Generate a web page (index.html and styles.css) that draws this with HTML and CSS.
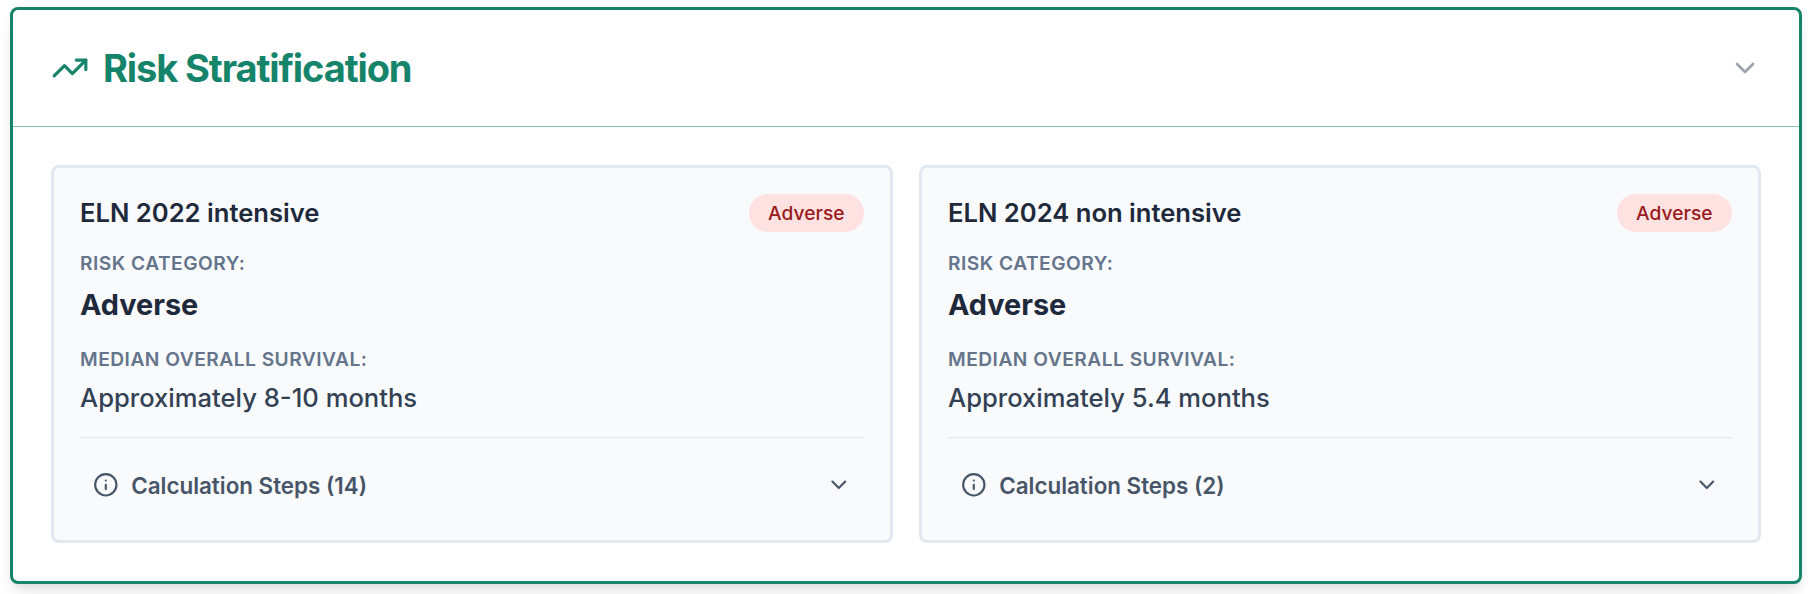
FILE: index.html
```html
<!DOCTYPE html>
<html>

<head>
    <title>Risk Stratification</title>
    <link rel="stylesheet" href="styles.css">
</head>

<body>
    <section class="panel">
        <header class="panel-header">
            <div class="panel-title">
                <svg class="trend-icon" viewBox="0 0 24 24" fill="none" stroke="currentColor" stroke-width="2" stroke-linecap="round" stroke-linejoin="round">
                    <polyline points="22 7 13.5 15.5 8.5 10.5 2 17"/>
                    <polyline points="16 7 22 7 22 13"/>
                </svg>
                <h2>Risk Stratification</h2>
            </div>
            <svg class="panel-chevron" viewBox="0 0 24 24" fill="none" stroke="currentColor" stroke-width="2" stroke-linecap="round" stroke-linejoin="round">
                <path d="m6 9 6 6 6-6"/>
            </svg>
        </header>
        <div class="panel-body">
            <article class="card">
                <div class="card-top">
                    <h3>ELN 2022 intensive</h3>
                    <span class="badge">Adverse</span>
                </div>
                <div class="label">RISK CATEGORY:</div>
                <div class="category">Adverse</div>
                <div class="label">MEDIAN OVERALL SURVIVAL:</div>
                <div class="survival">Approximately 8-10 months</div>
                <div class="steps">
                    <div class="steps-name">
                        <svg class="info-icon" viewBox="0 0 24 24" fill="none" stroke="currentColor" stroke-width="2" stroke-linecap="round" stroke-linejoin="round">
                            <circle cx="12" cy="12" r="10"/>
                            <path d="M12 16v-4"/>
                            <path d="M12 8h.01"/>
                        </svg>
                        <span>Calculation Steps (14)</span>
                    </div>
                    <svg class="steps-chevron" viewBox="0 0 24 24" fill="none" stroke="currentColor" stroke-width="2" stroke-linecap="round" stroke-linejoin="round">
                        <path d="m6 9 6 6 6-6"/>
                    </svg>
                </div>
            </article>
            <article class="card">
                <div class="card-top">
                    <h3>ELN 2024 non intensive</h3>
                    <span class="badge">Adverse</span>
                </div>
                <div class="label">RISK CATEGORY:</div>
                <div class="category">Adverse</div>
                <div class="label">MEDIAN OVERALL SURVIVAL:</div>
                <div class="survival">Approximately 5.4 months</div>
                <div class="steps">
                    <div class="steps-name">
                        <svg class="info-icon" viewBox="0 0 24 24" fill="none" stroke="currentColor" stroke-width="2" stroke-linecap="round" stroke-linejoin="round">
                            <circle cx="12" cy="12" r="10"/>
                            <path d="M12 16v-4"/>
                            <path d="M12 8h.01"/>
                        </svg>
                        <span>Calculation Steps (2)</span>
                    </div>
                    <svg class="steps-chevron" viewBox="0 0 24 24" fill="none" stroke="currentColor" stroke-width="2" stroke-linecap="round" stroke-linejoin="round">
                        <path d="m6 9 6 6 6-6"/>
                    </svg>
                </div>
            </article>
        </div>
    </section>
</body>

</html>
```

FILE: styles.css
```css
html,
body {
    height: 100%;
}

body {
    margin: 0;
    padding: 7px 6px 0 10px;
    box-sizing: border-box;
    background-color: #fff;
    font-family: Inter, "Liberation Sans", sans-serif;
    overflow: hidden;
}

.panel {
    height: 577px;
    box-sizing: border-box;
    border: 3px solid #15846a;
    border-radius: 8px;
    background-color: #fff;
    box-shadow: 0 10px 15px -3px rgba(0, 0, 0, 0.1), 0 4px 6px -2px rgba(0, 0, 0, 0.05);
}

.panel-header {
    height: 117px;
    box-sizing: border-box;
    padding: 0 38px;
    border-bottom: 1px solid #82c6b0;
    display: flex;
    align-items: center;
    justify-content: space-between;
}

.panel-title {
    display: flex;
    align-items: center;
    gap: 14px;
    color: #15846a;
}

.panel-title h2 {
    margin: 0;
    font-size: 38px;
    line-height: 44px;
    font-weight: 700;
    letter-spacing: -1.1px;
}

.trend-icon {
    width: 38px;
    height: 38px;
}

.panel-chevron {
    width: 32px;
    height: 32px;
    color: #9ca3af;
}

.panel-body {
    display: grid;
    grid-template-columns: 1fr 1fr;
    gap: 26px;
    padding: 38px;
}

.card {
    height: 378px;
    box-sizing: border-box;
    padding: 25px 26px 0;
    border: 3px solid #e2e8f0;
    border-radius: 8px;
    background-color: #f8fafc;
}

.card-top {
    display: flex;
    align-items: center;
    justify-content: space-between;
    height: 38px;
    margin-bottom: 19px;
}

.card-top h3 {
    margin: 0;
    font-size: 25.6px;
    font-weight: 600;
    color: #1e293b;
}

.badge {
    margin-top: 2px;
    padding: 0 19.5px;
    line-height: 38px;
    border-radius: 19px;
    background-color: #fee2e2;
    color: #991b1b;
    font-size: 19.2px;
    font-weight: 500;
}

.label {
    font-size: 19.2px;
    line-height: 26px;
    font-weight: 600;
    letter-spacing: 0.48px;
    color: #64748b;
}

.category {
    margin: 9px 0 21px;
    font-size: 28.8px;
    line-height: 40px;
    font-weight: 700;
    color: #1e293b;
}

.survival {
    margin-top: 7px;
    font-size: 25.6px;
    line-height: 38px;
    font-weight: 500;
    color: #334155;
}

.steps {
    margin-top: 20px;
    height: 94px;
    padding: 0 12px 0 12.8px;
    border-top: 1px solid #e2e8f0;
    display: flex;
    align-items: center;
    justify-content: space-between;
}

.steps-name {
    display: flex;
    align-items: center;
    gap: 12.8px;
    font-size: 22.4px;
    font-weight: 600;
    color: #475569;
}

.info-icon {
    width: 25.6px;
    height: 25.6px;
}

.steps-chevron {
    width: 25.6px;
    height: 25.6px;
    color: #475569;
}
```
